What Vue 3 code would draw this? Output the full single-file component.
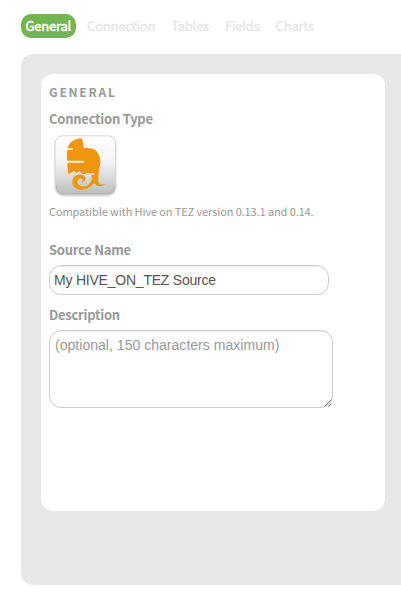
<script setup>
import { ref } from 'vue'

const tabs = ['General', 'Connection', 'Tables', 'Fields', 'Charts']
const active = ref('General')
const sourceName = ref('My HIVE_ON_TEZ Source')
const description = ref('')
</script>

<template>
  <div class="page">
    <nav class="tabs">
      <a
        v-for="tab in tabs"
        :key="tab"
        :class="['tab', { active: tab === active }]"
        @click="active = tab"
      ><span>{{ tab }}</span></a>
    </nav>
    <main class="panel">
      <section class="card">
        <h2 class="heading">GENERAL</h2>
        <div class="label type-label">Connection Type</div>
        <svg class="logo" viewBox="12 12 216 216">
          <defs>
            <linearGradient id="tile" x1="0" y1="0" x2="0" y2="1">
              <stop offset="0" stop-color="#fff" />
              <stop offset="0.45" stop-color="#f4f4f4" />
              <stop offset="1" stop-color="#bdbdbd" />
            </linearGradient>
            <filter id="soft" x="-10%" y="-10%" width="120%" height="125%">
              <feGaussianBlur stdDeviation="3" />
            </filter>
          </defs>
          <rect x="31" y="36" width="181" height="176" rx="24" fill="#777" opacity="0.5" filter="url(#soft)" />
          <rect x="30.5" y="32.5" width="181" height="174" rx="22" fill="url(#tile)" stroke="#d6d6d6" stroke-width="3" />
          <path d="M34 183Q35 206 54 206H188Q208 206 209 183" fill="none" stroke="#b2b2b2" stroke-width="3" />
          <path
            fill="#ef960d"
            d="M109 40C90 41 75 50 69 65L67 70L83 70V74L67 75C65 88 66 99 67 107H117V113H67L69 145C77 147 81 141 86 137C92 146 99 142 104 137C108 144 114 149 120 147L123 144H149V149H138C144 160 138 174 126 182C117 188 101 184 98 175C95 166 103 158 110 161C114 163 113 168 110 169C116 172 123 167 122 160C120 149 105 146 94 151C80 158 78 175 88 186C100 199 127 196 141 181C146 175 149 174 153 179C158 186 171 185 181 177C171 179 163 179 161 172C159 165 161 158 160 151C163 143 161 136 162 130C165 122 167 115 166 107C165 97 161 86 154 78C146 71 134 69 125 69L116 70C116 60 115 49 109 40Z"
          />
        </svg>
        <p class="note">Compatible with Hive on TEZ version 0.13.1 and 0.14.</p>
        <label class="label name-label" for="name">Source Name</label>
        <input id="name" v-model="sourceName" class="field name" type="text" />
        <label class="label desc-label" for="desc">Description</label>
        <div class="area">
          <textarea
            id="desc"
            v-model="description"
            class="field desc"
            placeholder="(optional, 150 characters maximum)"
          ></textarea>
          <svg class="grip" viewBox="0 0 8 8">
            <path d="M.5 7.5L7.5 .5M4.5 7.5L7.5 4.5" fill="none" stroke="#666" stroke-width="1" />
          </svg>
        </div>
      </section>
    </main>
  </div>
</template>

<style>
body {
  background: #fff;
  overflow: hidden;
}
</style>

<style scoped>
.page {
  box-sizing: border-box;
  height: 600px;
  padding: 14px 0 0 21px;
  overflow: hidden;
  font-family: "Noto Sans CJK SC", "Noto Sans", sans-serif;
  color: #999;
}
.tabs {
  display: flex;
  gap: 6px;
  height: 24px;
}
.tab {
  box-sizing: border-box;
  height: 24px;
  padding: 0 5px;
  border-radius: 10px;
  font-size: 13px;
  font-weight: 400;
  -webkit-text-stroke: 0.45px currentColor;
  letter-spacing: -0.2px;
  line-height: 24px;
  color: #e8e8e8;
  white-space: nowrap;
  cursor: pointer;
}
.tab.active {
  padding: 0 5px 0 4.5px;
  background: #72b64f;
  color: #fff;
}
.panel {
  box-sizing: border-box;
  height: 531px;
  margin-top: 16px;
  padding: 20px 16px 0 20px;
  border-radius: 12px 0 0 12px;
  background: #e8e8e8;
}
.card {
  box-sizing: border-box;
  display: flex;
  flex-direction: column;
  align-items: flex-start;
  height: 437px;
  padding: 8px;
  border-radius: 12px;
  background: #fff;
}
.heading {
  margin: 0;
  font-size: 12px;
  font-weight: 700;
  line-height: 20px;
  letter-spacing: 1.8px;
}
.label {
  font-size: 13px;
  font-weight: 700;
  line-height: 20px;
  letter-spacing: -0.25px;
  white-space: nowrap;
}
.type-label {
  margin-top: 7px;
}
.logo {
  width: 72px;
  height: 72px;
}
.note {
  margin: 0;
  font-size: 11px;
  line-height: 20px;
  letter-spacing: -0.11px;
  white-space: nowrap;
}
.name-label {
  margin-top: 19px;
}
.field {
  box-sizing: border-box;
  display: block;
  margin: 0;
  border: 1px solid #ccc;
  border-radius: 12px;
  outline: none;
  background: #fff;
  box-shadow: inset 0 1px 1px rgba(0, 0, 0, 0.075);
  font-family: "Liberation Sans", Arial, sans-serif;
  font-size: 14px;
  color: #555;
}
.name {
  width: 280px;
  height: 30px;
  margin-top: 5px;
  padding: 4px;
  line-height: 20px;
  letter-spacing: -0.22px;
}
.desc-label {
  margin-top: 10px;
}
.area {
  position: relative;
  margin-top: 5px;
}
.desc {
  width: 284px;
  height: 78px;
  padding: 4px 5px;
  line-height: 20px;
  letter-spacing: 0.03px;
  resize: none;
}
.desc::placeholder {
  color: #999;
  opacity: 1;
}
.grip {
  position: absolute;
  right: 1px;
  bottom: 1px;
  width: 8px;
  height: 8px;
}
</style>
